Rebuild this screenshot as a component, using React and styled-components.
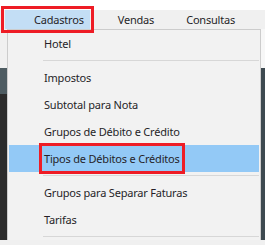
import styled, { createGlobalStyle } from 'styled-components';

const GlobalStyle = createGlobalStyle`
  html, body {
    margin: 0;
    padding: 0;
    background: #f0f0f0;
  }
  body {
    font-family: "Noto Sans", "Open Sans", sans-serif;
  }
`;

const menus = [
  { label: 'Cadastros', pad: 29, active: true },
  { label: 'Vendas', pad: 28 },
  { label: 'Consultas', pad: 26 },
];

const entries = [
  { label: 'Hotel' },
  { separator: true },
  { label: 'Impostos' },
  { label: 'Subtotal para Nota' },
  { label: 'Grupos de Débito e Crédito' },
  { label: 'Tipos de Débitos e Créditos', selected: true },
  { separator: true },
  { label: 'Grupos para Separar Faturas' },
  { label: 'Tarifas' },
  { separator: true },
];

const App = () => {
  return (
    <Page>
      <GlobalStyle />
      <TopStrip />
      <MenuBar>
        {menus.map((m) => (
          <MenuItem key={m.label} $pad={m.pad} $active={m.active}>
            {m.label}
          </MenuItem>
        ))}
      </MenuBar>
      <Body>
        <LeftSide />
        <Dropdown>
          {entries.map((e, i) =>
            e.separator ? (
              <Separator key={i} />
            ) : (
              <Entry key={e.label} $selected={e.selected}>
                <Label $marked={e.selected}>{e.label}</Label>
              </Entry>
            )
          )}
        </Dropdown>
        <RightSide />
      </Body>
    </Page>
  );
};

const Page = styled.div`
  width: 265px;
  height: 245px;
  overflow: hidden;
  display: flex;
  flex-direction: column;
  background: #f0f0f0;
  font-size: 11px;
  letter-spacing: -0.2px;
  color: #261f28;
`;

const TopStrip = styled.div`
  height: 10px;
  background: #ffffff;
`;

const MenuBar = styled.div`
  height: 19px;
  display: flex;
  align-items: stretch;
  padding-left: 5px;
  background: #f0f0f0;
  position: relative;
  z-index: 2;
`;

const MenuItem = styled.div`
  display: flex;
  align-items: center;
  padding: 0 6px 0 ${(p) => p.$pad}px;
  background: ${(p) => (p.$active ? '#c3def5' : 'transparent')};
  outline: ${(p) => (p.$active ? '3px solid #ee1c25' : 'none')};
  outline-offset: 1px;
`;

const Body = styled.div`
  display: flex;
  height: 211px;
`;

const LeftSide = styled.div`
  width: 7px;
  background: linear-gradient(#f0f0f0 0 39px, #4e5c62 39px 65px, #2c2c2c 65px);
`;

const RightSide = styled.div`
  width: 4px;
  background: linear-gradient(#f7f7f7 0 39px, #3e4a50 39px);
`;

const Dropdown = styled.div`
  flex: 1;
  display: flex;
  flex-direction: column;
  background: #f2f2f2;
  border: 1px solid #cccccc;
  border-bottom: none;
`;

const Entry = styled.div`
  height: 27px;
  display: flex;
  align-items: center;
  padding-left: 35px;
  background: ${(p) => (p.$selected ? '#93c9f6' : 'transparent')};
  margin: 0 1px;
`;

const Label = styled.span`
  display: inline-block;
  line-height: 27px;
  padding: 0 3px;
  margin-left: -3px;
  outline: ${(p) => (p.$marked ? '3px solid #ee1c25' : 'none')};
  outline-offset: -1px;
`;

const Separator = styled.div`
  height: 7px;
  display: flex;
  align-items: center;
  padding-left: 35px;
  padding-right: 1px;

  &::after {
    content: '';
    flex: 1;
    height: 1px;
    background: #d7d7d7;
  }
`;

export default App;
